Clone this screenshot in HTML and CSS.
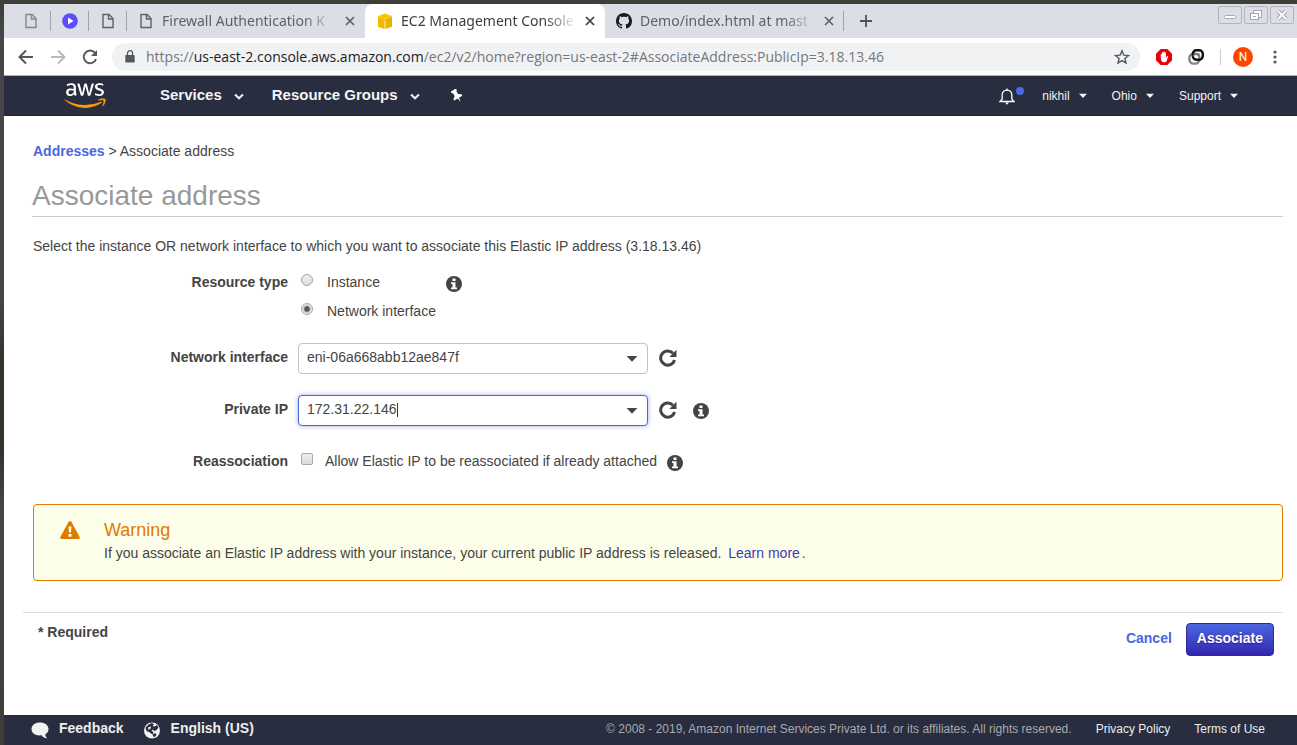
FILE: index.html
```html
<!DOCTYPE html>
<html lang="en">
<head>
<meta charset="utf-8">
<title>EC2 Management Console</title>
<link rel="stylesheet" href="styles.css">
</head>
<body>
<svg class="defs" aria-hidden="true">
  <symbol id="doc" viewBox="0 0 12 16"><path d="M1 1.500h6l4 4v9H1zM6.500 1.500v4.500h4.500" fill="none" stroke="currentColor" stroke-width="1.400"/></symbol>
  <symbol id="close" viewBox="0 0 10 10"><path d="M1 1l8 8M9 1l-8 8" stroke="currentColor" stroke-width="1.700" fill="none"/></symbol>
  <symbol id="chevron" viewBox="0 0 10 7"><path d="M1 1.500l4 3.800 4-3.800" stroke="currentColor" stroke-width="2" fill="none"/></symbol>
  <symbol id="caret" viewBox="0 0 10 6"><path d="M1 .8h8L5 5z" fill="currentColor"/></symbol>
  <symbol id="info" viewBox="0 0 16 16"><circle cx="8" cy="8" r="8" fill="currentColor"/><path d="M6.500 2.600h3v2.500h-3zM5 6.200h4.500v5.300H11v1.700H5v-1.700h1.500V7.900H5z" fill="#fff"/></symbol>
  <symbol id="refresh" viewBox="0 0 18 18"><path d="M14 4.200A7.100 7.100 0 1 0 15.600 11" fill="none" stroke="currentColor" stroke-width="3"/><path d="M17.500.800v7.200h-7.200z" fill="currentColor"/></symbol>
</svg>
<div class="desktop">
  <div class="browser">
    <div class="tabstrip">
      <div class="tab tab-pinned"><svg class="i-doc faded"><use href="#doc"/></svg></div>
      <div class="tab tab-pinned"><svg class="i16" viewBox="0 0 16 16"><circle cx="8" cy="8" r="7.800" fill="#5b4dfa"/><path d="M6 4.500v7l5.500-3.500z" fill="#fff"/></svg></div>
      <div class="tab tab-pinned"><svg class="i-doc"><use href="#doc"/></svg></div>
      <div class="tab tab-wide first-wide"><svg class="i-doc"><use href="#doc"/></svg><span class="tab-title">Firewall Authentication K</span><button class="tab-close" aria-label="Close tab"><svg><use href="#close"/></svg></button></div>
      <div class="tab tab-wide active">
        <svg class="i16" viewBox="0 0 16 16"><path d="M1 3l7-2.500L15 3v2.500L8 7.500 1 5.500z" fill="#f7cc0a"/><path d="M1 4.500l6.600 2V16L1 13.700z" fill="#f0b800"/><path d="M15 4.500l-6.600 2V16l6.600-2.300z" fill="#eeb000"/><path d="M4.500 3.200L8 2l3.500 1.200L8 4.400z" fill="#efbe00"/></svg>
        <span class="tab-title">EC2 Management Console</span><button class="tab-close" aria-label="Close tab"><svg><use href="#close"/></svg></button></div>
      <div class="tab tab-wide last">
        <svg class="i16" viewBox="0 0 16 16"><path fill="#1b1b1f" d="M8 0C3.580 0 0 3.580 0 8c0 3.540 2.290 6.530 5.470 7.590.4.070.550-.170.550-.380 0-.190-.010-.820-.010-1.490-2.010.370-2.530-.490-2.690-.940-.090-.230-.480-.940-.820-1.130-.280-.150-.680-.520-.010-.530.630-.010 1.080.580 1.230.820.720 1.210 1.870.870 2.330.660.070-.520.280-.870.510-1.070-1.780-.200-3.640-.890-3.640-3.950 0-.870.310-1.590.820-2.150-.080-.200-.360-1.020.080-2.120 0 0 .670-.210 2.200.820.640-.180 1.320-.270 2-.270s1.360.090 2 .270c1.530-1.040 2.200-.820 2.200-.820.440 1.100.160 1.920.080 2.120.510.560.820 1.270.820 2.150 0 3.070-1.870 3.750-3.650 3.950.290.250.540.730.540 1.480 0 1.070-.010 1.930-.010 2.200 0 .210.150.460.550.380A8.010 8.010 0 0 0 16 8c0-4.420-3.580-8-8-8z"/></svg>
        <span class="tab-title">Demo/index.html at mast</span><button class="tab-close" aria-label="Close tab"><svg><use href="#close"/></svg></button></div>
      <button class="new-tab" aria-label="New tab"><svg viewBox="0 0 12 12"><path d="M6 0v12M0 6h12" stroke="#505257" stroke-width="1.800"/></svg></button>
      <div class="window-buttons">
        <button aria-label="Minimize"><svg viewBox="0 0 22 16"><rect x="5.500" y="8.500" width="11" height="3" rx="1" fill="#fff" stroke="#a9aaae"/></svg></button>
        <button aria-label="Restore"><svg viewBox="0 0 22 16"><g fill="#fff" stroke="#a3a4a8"><rect x="8.500" y="3.500" width="8" height="7"/><rect x="5.500" y="6.500" width="8" height="6"/><path d="M8 9.500h3"/></g></svg></button>
        <button aria-label="Close window"><svg viewBox="0 0 22 16"><path d="M7 4l8 8M15 4l-8 8" stroke="#a3a4a8" stroke-width="4"/><path d="M7 4l8 8M15 4l-8 8" stroke="#fff" stroke-width="2"/></svg></button>
      </div>
    </div>
    <div class="toolbar">
      <button class="tool" aria-label="Back"><svg viewBox="0 0 16 16"><path d="M15 8H2M8 1.500L1.500 8 8 14.500" stroke="#55585d" stroke-width="2" fill="none"/></svg></button>
      <button class="tool" aria-label="Forward"><svg viewBox="0 0 16 16"><path d="M1 8h13M8 1.500L14.500 8 8 14.500" stroke="#b9babd" stroke-width="2" fill="none"/></svg></button>
      <button class="tool" aria-label="Reload"><svg viewBox="0 0 16 16"><path d="M13 4A6.300 6.300 0 1 0 14 10" stroke="#55585d" stroke-width="2" fill="none"/><path d="M15 1v6H9z" fill="#55585d"/></svg></button>
      <div class="omnibox">
        <svg class="i-lock" viewBox="0 0 10 13"><path d="M1 5h8q.7 0 .7.700v6q0 .8-.8.800H1.100q-.8 0-.8-.8v-6Q.3 5 1 5z" fill="#55585d"/><path d="M2.500 5.500V3.200a2.500 2.500 0 0 1 5 0v2.300" stroke="#55585d" stroke-width="1.300" fill="none"/></svg>
        <span class="url">https://<span class="host">us-east-2.console.aws.amazon.com</span>/ec2/v2/home?region=us-east-2#AssociateAddress:PublicIp=3.18.13.46</span>
        <svg class="i16" viewBox="0 0 16 16"><path d="M8 1.800l1.800 4.300 4.700.4-3.600 3 1.100 4.600-4-2.500-4 2.500 1.100-4.600-3.600-3 4.700-.4z" fill="none" stroke="#55585d" stroke-width="1.400"/></svg>
      </div>
      <svg class="i16" viewBox="0 0 16 16"><path d="M4.700 0h6.600L16 4.700v6.600L11.300 16H4.700L0 11.300V4.700z" fill="#e8000b"/><path d="M4.800 8.500V5.200q.6-.8 1.200 0V3.500q.6-.8 1.300 0V2.800q.7-.7 1.300 0v.8q.7-.8 1.300 0v5.200l1.200-1.600q.9-.3 1 .4L10.700 12q-.6 1.200-2 1.200H7.600Q6 13.200 5.300 11.600z" fill="#fff"/></svg>
      <svg class="i16" viewBox="0 0 16 16"><rect x="1.400" y="4.800" width="10" height="9.800" rx="4" fill="none" stroke="#858585" stroke-width="2.400"/><rect x="4.800" y="1.300" width="10" height="9.400" rx="3.600" fill="none" stroke="#111" stroke-width="2.400"/><path d="M5 7.300q1.500-2.500 4-2.500h.8q1.600.2 1.600 2.500" fill="none" stroke="#777" stroke-width="1.600"/></svg>
      <span class="tool-sep"></span>
      <span class="avatar">N</span>
      <button class="menu" aria-label="Menu"><svg viewBox="0 0 4 14"><g fill="#55585d"><circle cx="2" cy="2" r="1.600"/><circle cx="2" cy="7" r="1.600"/><circle cx="2" cy="12" r="1.600"/></g></svg></button>
    </div>
    <header class="aws-nav">
      <svg class="aws-logo" viewBox="0 0 304 182" role="img" aria-label="AWS"><path fill="#fff" d="M86 66l2 9c0 3 1 5 3 8v2l-1 3-7 4-2 1-3-1-4-5-3-6c-8 9-18 14-29 14-9 0-16-3-20-8-5-4-8-11-8-19s3-15 9-20c6-6 14-8 25-8a79 79 0 0 1 22 3v-7c0-8-2-13-5-16-3-4-8-5-16-5l-11 1a80 80 0 0 0-14 5h-2c-1 0-2-1-2-3v-5l1-3c0-1 1-2 3-2l12-5 16-2c12 0 20 3 26 8 5 6 8 14 8 25v32zM46 82l10-2c4-1 7-4 10-7l3-6 1-9v-4a84 84 0 0 0-19-2c-6 0-11 1-15 4-3 2-4 6-4 11s1 8 3 11c3 2 6 4 11 4zm80 10-4-1-2-3-23-78-1-4 2-2h10l4 1 2 4 17 66 15-66 2-4 4-1h8l4 1 2 4 16 67 17-67 2-4 4-1h9c2 0 3 1 3 2v2l-1 2-24 78-2 4-4 1h-9l-4-1-1-4-16-65-15 64-2 4-4 1h-9zm129 3a66 66 0 0 1-27-6l-3-3-1-2v-5c0-2 1-3 2-3h2l3 1a54 54 0 0 0 23 5c6 0 11-2 14-4 4-2 5-5 5-9l-2-7-10-5-15-5c-7-2-13-6-16-10a24 24 0 0 1 5-34l10-5a44 44 0 0 1 20-2 110 110 0 0 1 12 3l4 2 3 2 1 4v4c0 3-1 4-2 4l-4-2c-6-2-12-3-19-3-6 0-11 0-14 2s-4 5-4 9c0 3 1 5 3 7s5 4 11 6l14 4c7 3 12 6 15 10s5 9 5 14l-3 12-7 8c-3 3-7 5-11 6l-14 2z"/><path fill="#f90" d="M274 144A220 220 0 0 1 4 124c-4-3-1-6 2-4a300 300 0 0 0 263 16c5-2 10 4 5 8zM287 128c-4-5-28-3-38-1-4 0-4-3-1-5 19-13 50-9 53-5 4 5-1 36-18 51-3 2-6 1-5-2 5-10 13-33 9-38z"/></svg>
      <nav class="nav-main">
        <button>Services<svg><use href="#chevron"/></svg></button>
        <button>Resource Groups<svg><use href="#chevron"/></svg></button>
        <button aria-label="Pin shortcuts"><svg class="i-pin" viewBox="0 0 14 14"><path transform="rotate(-32 7 7)" d="M4 0h6v2L9 2.500v3.300l2.700 2V9.500H7.800L7 14l-.8-4.500H2.300V7.800L5 5.800V2.500L4 2z" fill="#fff"/></svg></button>
      </nav>
      <div class="nav-user">
        <button class="bell" aria-label="Notifications"><svg viewBox="0 0 16 17"><path d="M1 13.500h14L12.800 11V6.500Q12.500 2.500 8 2.200 3.500 2.500 3.200 6.500V11zM8 .5v2" fill="none" stroke="#fff" stroke-width="1.300"/><path d="M6 14.500h4L8 16.800z" fill="#fff"/></svg><span class="dot"></span></button>
        <button>nikhil<svg><use href="#caret"/></svg></button>
        <button>Ohio<svg><use href="#caret"/></svg></button>
        <button>Support<svg><use href="#caret"/></svg></button>
      </div>
    </header>
    <main class="page">
      <nav class="breadcrumb"><a href="#addresses">Addresses</a> &gt; Associate address</nav>
      <h1>Associate address</h1>
      <p class="intro">Select the instance OR network interface to which you want to associate this Elastic IP address (3.18.13.46)</p>
      <form class="form" id="associate">
        <div class="row row-radios">
          <span class="label" id="rt">Resource type</span>
          <div class="radios" role="radiogroup" aria-labelledby="rt">
            <label><input type="radio" name="type">Instance</label>
            <label><input type="radio" name="type" checked>Network interface</label>
          </div>
          <svg class="i-info"><use href="#info"/></svg>
        </div>
        <div class="row">
          <label class="label" for="eni">Network interface</label>
          <div class="combo"><select id="eni"><option>eni-06a668abb12ae847f</option></select><svg><use href="#caret"/></svg></div>
          <button type="button" class="refresh" aria-label="Refresh interfaces"><svg><use href="#refresh"/></svg></button>
        </div>
        <div class="row">
          <label class="label" for="ip">Private IP</label>
          <div class="combo focused"><input id="ip" type="text" value="172.31.22.146"><span class="text-cursor"></span><svg><use href="#caret"/></svg></div>
          <button type="button" class="refresh" aria-label="Refresh addresses"><svg><use href="#refresh"/></svg></button>
          <svg class="i-info"><use href="#info"/></svg>
        </div>
        <div class="row">
          <span class="label">Reassociation</span>
          <label class="check"><input type="checkbox">Allow Elastic IP to be reassociated if already attached</label>
          <svg class="i-info"><use href="#info"/></svg>
        </div>
      </form>
      <section class="warning">
        <svg class="i-warning" viewBox="0 0 20 18"><path d="M8.700.800q1.300-1.400 2.600 0l8.400 15.200q.5 1.700-1.200 2h-17Q-.2 17.700.3 16z" fill="#e07b00"/><path d="M8.500 5.500h3l-.5 6H9zM8.500 13h3v2.800h-3z" fill="#fdfeea"/></svg>
        <div>
          <h2>Warning</h2>
          <p>If you associate an Elastic IP address with your instance, your current public IP address is released. <a href="#learn">Learn more</a>.</p>
        </div>
      </section>
      <div class="actions">
        <strong>* Required</strong>
        <div class="action-buttons">
          <button type="button" class="cancel">Cancel</button>
          <button type="submit" form="associate" class="primary">Associate</button>
        </div>
      </div>
    </main>
    <footer class="footer">
      <button><svg viewBox="0 0 18 17"><path d="M9 .5c4.800 0 8.500 2.700 8.500 6.500 0 2.500-1.200 4.200-3.200 5.300.1 1.600.7 2.800 1.900 4-2.800-.3-4.500-1.300-5.700-3C5 14 .5 11.500.5 7 .5 3.200 4.200.5 9 .5z" fill="#f2f2f2"/></svg>Feedback</button>
      <button><svg viewBox="0 0 18 17"><circle cx="9" cy="8.500" r="8" fill="#f2f2f2"/><path d="M5.500 2.500L9 1l2 1.500L9.500 4l2 .5 2.500-1.500 1.500 2.500-2.500 3-2 .5-1-1.500-1.500 1 2 2-1 2-3.500-2.500L3.500 9 2.500 5.500zM9.500 12.500l3-1.500 1 2-2.500 2.500z" fill="#282d40"/><path d="M5 5.500l2.500-1 .5 1.500L5.500 8z" fill="#f2f2f2"/></svg>English (US)</button>
      <span class="copyright">© 2008 - 2019, Amazon Internet Services Private Ltd. or its affiliates. All rights reserved.</span>
      <a href="#privacy">Privacy Policy</a>
      <a href="#terms">Terms of Use</a>
    </footer>
  </div>
</div>
</body>
</html>
```
FILE: styles.css
```css
* { box-sizing: border-box; }
body { margin: 0; font: 14px/20px "Liberation Sans", Arial, sans-serif; color: #444; }
button, input, select { font: inherit; color: inherit; }
button { background: none; border: 0; padding: 0; }
a { text-decoration: none; }
h1, h2, p { margin: 0; font-weight: normal; }
svg { display: block; flex: none; }
.defs { display: none; }
.i16 { width: 16px; height: 16px; }
.i-doc { width: 12px; height: 16px; color: #606165; }
.faded { color: #85868a; }

.desktop { min-height: 100vh; display: flex; padding: 4px 0 0 4px; background: linear-gradient(#3f3e39 4px, #474749 40px, #454547 300px, #33332c 360px, #33332c 450px, #4a4546 510px, #3e3d3a); }
.browser { flex: 1; min-width: 0; display: flex; flex-direction: column; background: #fff; }

.tabstrip { display: flex; height: 34px; background: #dcdee6; font: 14px/20px "Noto Sans", sans-serif; color: #5f6166; }
.tab { display: flex; align-items: center; position: relative; }
.tab:not(.active)::after { content: ""; position: absolute; right: 0; top: 7px; width: 1px; height: 20px; background: #a1a3aa; }
.tab-pinned { width: 38px; justify-content: center; }
.tab-pinned:first-child { width: 47px; padding-left: 7px; }
.tab-wide { width: 240px; gap: 8px; padding: 0 10px 0 12px; }
.tab.first-wide { width: 238px; padding-left: 13px; gap: 10px; }
.tab.tab-wide:has(+ .active)::after { display: none; }
.tab.active { background: #fff; border-radius: 8px 8px 0 0; color: #3c3d40; }
.tab.last { border-radius: 0 0 0 8px; width: 239px; padding-left: 11px; }
.tab-title { flex: 1; overflow: hidden; white-space: nowrap; mask-image: linear-gradient(90deg, #000 82%, transparent); }
.tab-close svg { width: 10px; height: 10px; }
.new-tab { padding-left: 16px; }
.new-tab svg { width: 12px; height: 12px; }
.window-buttons { margin-left: auto; display: flex; gap: 2px; padding: 2px 3px 0 0; align-items: flex-start; }
.window-buttons button { width: 24px; height: 18px; border: 1px solid #b4b5b9; border-radius: 2px; }
.window-buttons svg { width: 22px; height: 16px; }

.toolbar { display: flex; align-items: center; height: 38px; padding: 0 18px 0 14px; gap: 16px; border-bottom: 1px solid #adb1ae; }
.tool svg { width: 16px; height: 16px; }
.omnibox { flex: 1; min-width: 0; height: 28px; display: flex; align-items: center; gap: 11px; padding: 0 10px 0 13px; margin-left: -2px; border-radius: 14px; background: #f1f2f4; font: 14px/20px "Open Sans", sans-serif; color: #75777c; }
.i-lock { width: 10px; height: 13px; }
.url { flex: 1; white-space: nowrap; overflow: hidden; }
.host { color: #202124; }
.tool-sep { width: 1px; height: 16px; background: #cbccd0; }
.avatar { width: 20px; height: 20px; border-radius: 50%; background: #ff4500; color: #fff; text-align: center; font: 12px/20px Roboto, sans-serif; margin-left: -4px; }
.menu { padding: 0 2px 0 4px; }
.menu svg { width: 4px; height: 14px; }

.aws-nav { display: flex; align-items: center; height: 40px; padding: 0 58px 0 60px; background: #282d40; color: #f4f4f4; border-bottom: 1px solid #202433; text-shadow: 0 1px 1px #000; }
.aws-logo { width: 42px; height: 25px; }
.nav-main { display: flex; align-items: center; gap: 28px; margin-left: 54px; padding-bottom: 2px; font: bold 15px/20px "Liberation Sans", Arial, sans-serif; }
.nav-main button, .nav-user button { display: flex; align-items: center; white-space: nowrap; }
.nav-main button { gap: 12px; }
.nav-main button svg { width: 10px; height: 7px; margin-top: 4px; }
.nav-main button .i-pin { width: 14px; height: 14px; margin: 2px 0 0 2px; }
.nav-user { display: flex; align-items: center; margin-left: auto; gap: 24px; font-size: 12px; }
.nav-user button { gap: 8px; }
.nav-user button svg { width: 10px; height: 6px; margin-top: 1px; }
.nav-user .bell { gap: 1px; margin-right: -6px; align-items: flex-start; }
.nav-user .bell svg { width: 16px; height: 17px; }
.dot { width: 8px; height: 8px; border-radius: 50%; background: #4a69e2; }

.page { flex: 1; padding: 25px 14px 0 29px; }
.breadcrumb a { font-weight: bold; color: #4a66de; }
h1 { font-size: 28px; line-height: 34px; color: #999; margin: 18px 0 19px -1px; padding-bottom: 3px; border-bottom: 1px solid #ccc; }
.form { padding-top: 16px; }
.row { display: flex; align-items: center; min-height: 32px; margin-bottom: 20px; }
.label { width: 255px; text-align: right; font-weight: bold; margin-right: 10px; padding-bottom: 2px; }
.row-radios { align-items: flex-start; margin-bottom: 21px; }
.radios { width: 145px; display: grid; gap: 9px; padding-left: 2px; }
.radios label, .check { display: flex; align-items: center; white-space: nowrap; }
.radios input { appearance: none; width: 12px; height: 12px; margin: 0 14px 4px 1px; border: 1px solid #a5a5a5; border-radius: 50%; background: linear-gradient(#eee, #dcdcdc); }
.radios input:checked { background: radial-gradient(circle, #555 2px, #e6e6e6 4px); }
.i-info { width: 16px; height: 16px; margin: 2px 0 0 4px; color: #444; }
.row-radios .i-info { margin: 4px 0 0 3px; }
.combo { display: flex; align-items: center; position: relative; width: 350px; height: 31px; border: 1px solid #c3c3c3; border-radius: 4px; background: #fff; }
.combo select { appearance: none; width: 100%; height: 29px; border: 0; padding: 0 30px 3px 8px; background: none; outline: 0; }
.combo svg { position: absolute; right: 8px; top: 11px; width: 14px; height: 8px; pointer-events: none; }
.combo.focused { border-color: #4a66d5; box-shadow: 0 0 5px #9eabe8; }
.combo input { field-sizing: content; height: 29px; border: 0; padding: 0 0 3px 8px; background: none; outline: 0; }
.text-cursor { width: 1px; height: 14px; background: #333; }
.refresh { margin: 0 12px 1px 11px; }
.refresh svg { width: 18px; height: 18px; }
.check { padding-bottom: 2px; }
.check input { appearance: none; width: 12px; height: 12px; margin: 0 12px 4px 3px; border: 1px solid #aaa; border-radius: 2px; background: linear-gradient(#eee, #dcdcdc); }
.check + .i-info { margin-left: 10px; }

.warning { display: flex; min-height: 77px; padding: 16px 26px 15px; gap: 24px; border: 1px solid #e07b00; border-radius: 4px; background: #fdfeea; margin-top: 26px; }
.i-warning { width: 20px; height: 18px; }
.warning h2 { font-size: 18px; line-height: 18px; color: #e07b00; margin-bottom: 4px; }
.warning a { color: #3f38bd; padding: 0 2px 0 3px; }
.actions { display: flex; justify-content: space-between; align-items: flex-start; margin: 31px 0 0 -10px; padding: 10px 9px 30px 15px; border-top: 1px solid #ddd; }
.actions strong { line-height: 18px; }
.action-buttons { display: flex; gap: 14px; align-items: center; font-weight: bold; }
.cancel { color: #4a66de; padding-bottom: 4px; }
.primary { height: 33px; padding: 0 10px 4px; color: #fff; border: 1px solid #2d2893; border-radius: 4px; background: linear-gradient(#4b66e0, #3326b0); text-shadow: 0 1px 1px #2a247a; }

.footer { display: flex; align-items: center; height: 30px; padding: 0 32px 2px 27px; background: #282d40; color: #eee; font-size: 12px; white-space: nowrap; }
.footer button { display: flex; align-items: center; gap: 10px; margin-right: 19px; padding-bottom: 2px; font: bold 14px/20px "Liberation Sans", Arial, sans-serif; }
.footer svg { width: 18px; height: 17px; margin-top: 4px; }
.copyright { margin-left: auto; color: #aaa; }
.footer a { color: #eee; margin-left: 24px; }
```
